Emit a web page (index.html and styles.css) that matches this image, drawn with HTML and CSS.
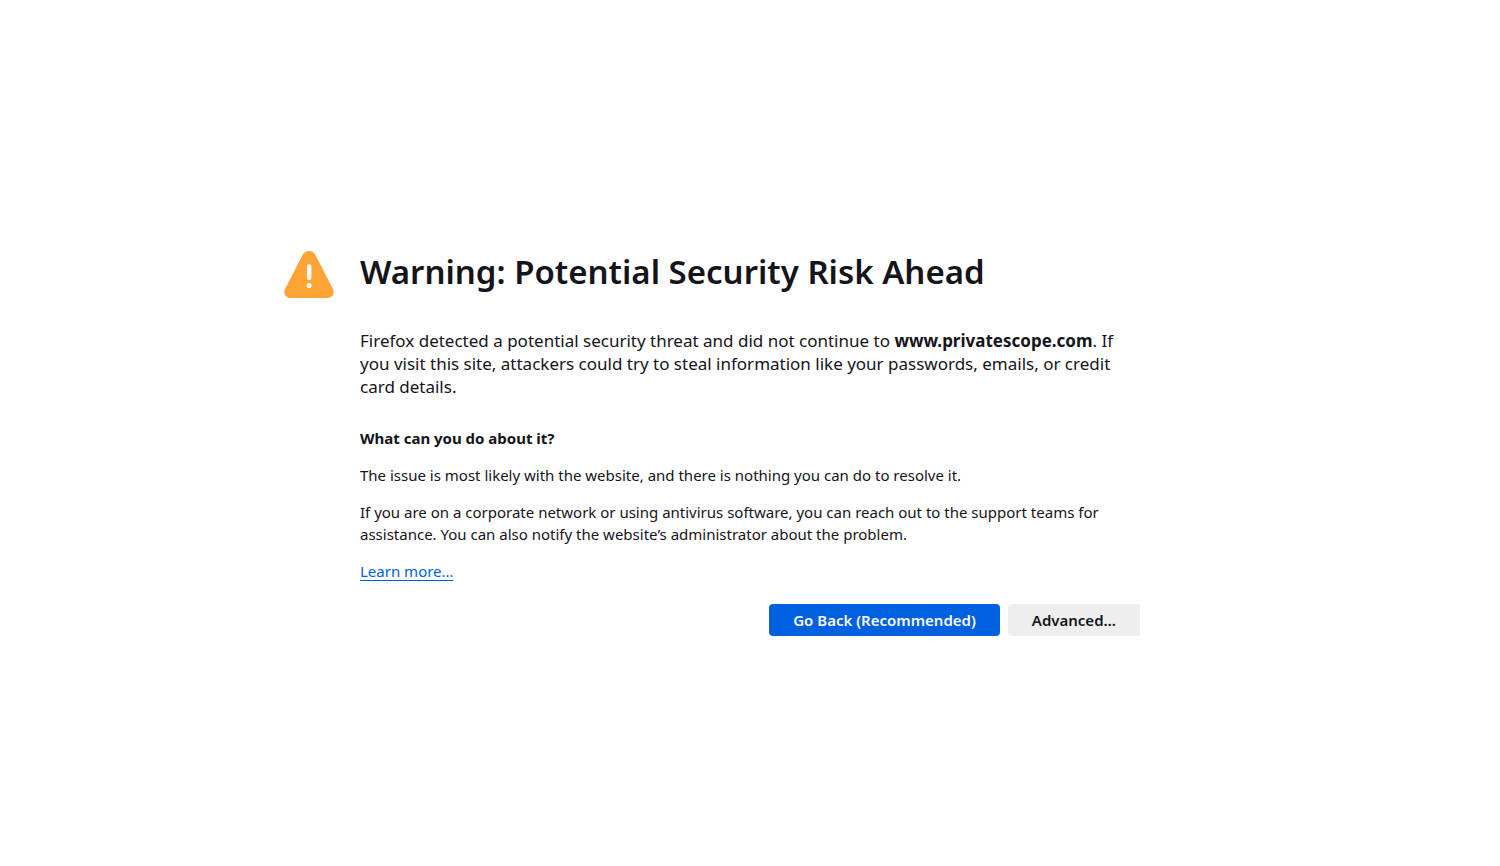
FILE: index.html
```html
<!DOCTYPE html>
<html lang="en">
<head>
    <meta charset="UTF-8">
    <meta name="viewport" content="width=device-width, initial-scale=1.0">
    <title>Warning: Potential Security Risk Ahead</title>
    <link rel="stylesheet" href="styles.css">
</head>
<body>

<main class="container">
    <svg class="warning-icon" viewBox="0 0 50 47" aria-hidden="true">
        <path fill="#ffa436" d="M49.2 38.6 31.6 4.2C30.2 1.5 27.8 0 25 0s-5.2 1.500-6.600 4.200L.8 38.600C-.9 42.500 1.700 47 6.200 47h37.600c4.500 0 7.100-4.500 5.400-8.400z"/>
        <path fill="none" stroke="#fff" stroke-width="4.400" stroke-linecap="round" d="M25.200 15.500v11.500"/>
        <circle fill="#fff" cx="25.200" cy="34.500" r="2.500"/>
    </svg>
    <div class="content">
        <h1>Warning: Potential Security Risk Ahead</h1>
        <p class="intro">Firefox detected a potential security threat and did not continue to <b>www.privatescope.com</b>. If you visit this site, attackers could try to steal information like your passwords, emails, or credit card details.</p>
        <h2>What can you do about it?</h2>
        <p>The issue is most likely with the website, and there is nothing you can do to resolve it.</p>
        <p>If you are on a corporate network or using antivirus software, you can reach out to the support teams for assistance. You can also notify the website’s administrator about the problem.</p>
        <p><a href="#">Learn more…</a></p>
        <div class="buttons">
            <button type="button" class="btn btn-primary">Go Back (Recommended)</button>
            <button type="button" class="btn">Advanced…</button>
        </div>
    </div>
</main>

</body>
</html>
```

FILE: styles.css
```css
body {
    font-family: "Noto Sans", sans-serif;
    font-size: 15px;
    line-height: 22px;
    color: #15141a;
    background-color: #fff;
    display: flex;
    justify-content: center;
    align-items: center;
    min-height: 100vh;
    margin: 0;
    padding: 0 48px;
    box-sizing: border-box;
}
.container {
    display: flex;
    align-items: flex-start;
    gap: 26px;
    width: 100%;
    max-width: 856px;
    margin-right: 76px;
}
.warning-icon {
    flex: none;
    width: 50px;
    height: 47px;
    margin-top: 20px;
}
.content {
    flex: 1;
}
h1 {
    margin: 20px 0 36px;
    font-size: 33px;
    font-weight: 600;
    line-height: 42px;
}
.intro {
    margin: 0 0 29px;
    font-size: 17px;
    line-height: 23px;
}
h2 {
    margin: 0;
    font-size: 15px;
    font-weight: 700;
    line-height: 22px;
}
p {
    margin: 15px 0;
}
a {
    color: #0061e0;
    text-underline-offset: 3px;
}
.buttons {
    display: flex;
    justify-content: flex-end;
    gap: 8px;
    margin-top: 22px;
}
.btn {
    min-height: 32px;
    padding: 0 24px;
    border: none;
    border-radius: 4px;
    background-color: #eee;
    color: #15141a;
    font: 600 15px "Noto Sans", sans-serif;
    cursor: pointer;
}
.btn-primary {
    background-color: #0061e0;
    color: #fbfbfe;
}
```
